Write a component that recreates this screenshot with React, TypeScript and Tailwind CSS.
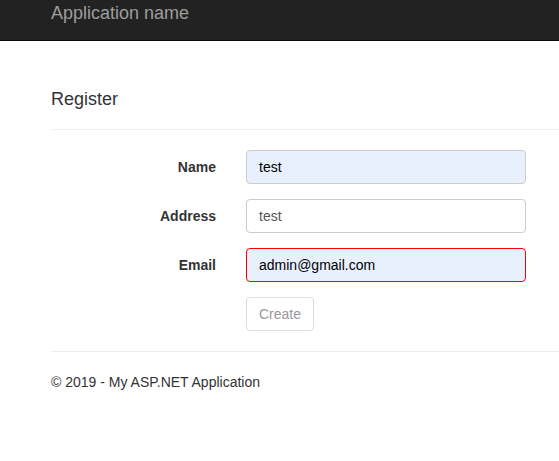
export default function App() {
  const font = { fontFamily: '"Liberation Sans", Arial, sans-serif' };
  return (
    <div className="min-h-[461px] bg-white text-[14px] leading-[20px] text-[#333]" style={font}>
      {/* Navbar */}
      <div className="h-[41px] bg-[#222] border-b border-[#080808] pl-[51px] flex items-center">
        <span className="text-[18px] leading-[20px] text-[#9d9d9d] -mt-[14px]">Application name</span>
      </div>

      <div className="pl-[51px]">
        <h4 className="text-[18px] leading-[20px] font-normal mt-[48px] mb-0">Register</h4>
        <hr className="mt-[20px] border-0 border-t border-[#eee]" />

        <form className="mt-[20px] flex flex-col gap-[15px]">
          <Row label="Name">
            <input
              readOnly
              value="test"
              className="w-[280px] h-[34px] px-[12px] rounded-[4px] border border-[#ccc] bg-[#e8f0fe] text-black outline-none"
            />
          </Row>
          <Row label="Address">
            <input
              readOnly
              value="test"
              className="w-[280px] h-[34px] px-[12px] rounded-[4px] border border-[#ccc] bg-white text-[#555] outline-none"
            />
          </Row>
          <Row label="Email">
            <input
              readOnly
              value="admin@gmail.com"
              className="w-[280px] h-[34px] px-[12px] rounded-[4px] border border-[#f00] bg-[#e8f0fe] text-black outline-none"
            />
          </Row>
          <Row label="">
            <button
              type="button"
              className="h-[34px] w-[68px] rounded-[4px] border border-[#ddd] bg-white text-[#999]"
            >
              Create
            </button>
          </Row>
        </form>

        <hr className="mt-[20px] border-0 border-t border-[#eee]" />
        <footer className="mt-[20px]">
          <p>© 2019 - My ASP.NET Application</p>
        </footer>
      </div>
    </div>
  );
}

function Row({ label, children }: { label: string; children: React.ReactNode }) {
  return (
    <div className="flex items-center gap-[30px]">
      <label className="w-[165px] text-right font-bold text-[#333]">{label}</label>
      {children}
    </div>
  );
}
